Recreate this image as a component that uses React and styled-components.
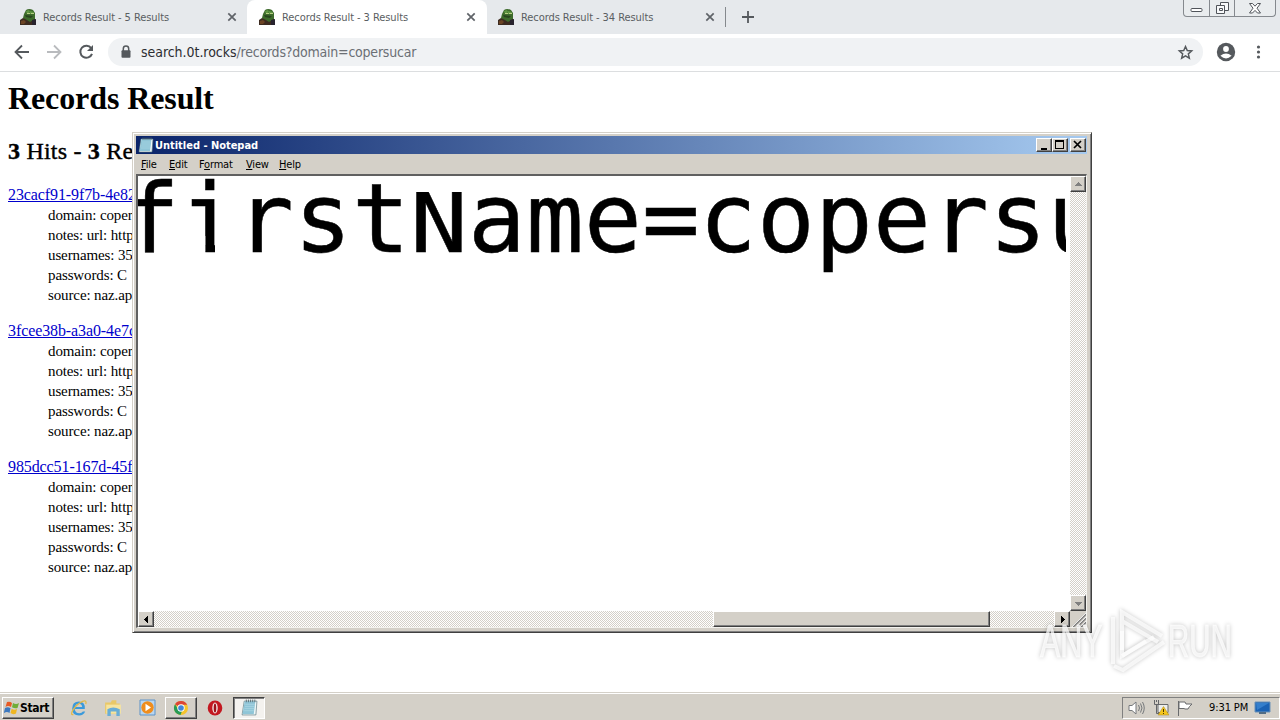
import React from 'react';
import styled, { createGlobalStyle, css } from 'styled-components';

const ui = '"DejaVu Sans Condensed", "DejaVu Sans", sans-serif';

const GlobalStyle = createGlobalStyle`
  * {
    box-sizing: border-box;
  }
  body {
    margin: 0;
    overflow: hidden;
    background: #fff;
  }
`;

const Screen = styled.div`
  position: relative;
  display: flex;
  flex-direction: column;
  width: 1280px;
  height: 720px;
  overflow: hidden;
  background: #fff;
  cursor: default;
`;

const TabStrip = styled.div`
  position: relative;
  display: flex;
  height: 34px;
  flex: none;
  padding-left: 8px;
  background: #e6e9ec;
`;

const Tab = styled.div`
  display: flex;
  align-items: center;
  width: ${(p) => p.$width}px;
  padding: 0 ${(p) => (p.$active ? 9 : 8)}px 0 ${(p) => p.$pad}px;
  border-radius: 8px 8px 0 0;
  background: ${(p) => (p.$active ? '#fff' : 'transparent')};
  font: 11px/14px ${ui};
  color: #5a5e62;
`;

const TabTitle = styled.span`
  flex: 1;
  margin: 1px 0 0 7px;
  white-space: nowrap;
  letter-spacing: -0.07px;
`;

const TabDivider = styled.i`
  width: 1px;
  height: 20px;
  margin: 7px 16px 0 0;
  background: #85898d;
`;

const NewTab = styled.svg`
  margin-top: 11px;
`;

const WindowButtons = styled.div`
  position: absolute;
  top: 0;
  right: 4px;
  display: flex;
  height: 17px;
  border: 1px solid #85898e;
  border-top: 0;
  border-radius: 0 0 4px 4px;
  background: #e9ecee;
`;

const WindowButton = styled.div`
  display: flex;
  align-items: center;
  justify-content: center;
  width: ${(p) => p.$width}px;
  & + & {
    border-left: 1px solid #85898e;
  }
`;

const Toolbar = styled.div`
  display: flex;
  align-items: center;
  height: 38px;
  flex: none;
  padding: 0 0 1px 12px;
  border-bottom: 1px solid #dcdee0;
  background: #fff;
`;

const NavIcon = styled.svg`
  width: 20px;
  height: 20px;
  margin-right: 12px;
  flex: none;
`;

const Omnibox = styled.div`
  display: flex;
  align-items: center;
  width: 1095px;
  height: 28px;
  margin-right: 12px;
  padding: 0 9px 0 12px;
  border-radius: 14px;
  background: #f0f2f4;
  font: 14px/20px ${ui};
  color: #6b6f74;
`;

const Url = styled.span`
  flex: 1;
  margin-left: 9px;
  white-space: nowrap;
  letter-spacing: -0.22px;
  b {
    font-weight: 400;
    letter-spacing: -0.04px;
    color: #2c2d30;
  }
`;

const Page = styled.div`
  flex: 1;
  padding: 9px 8px 0;
  font: 16px/20px "Liberation Serif", serif;
  color: #000;
  white-space: nowrap;
  h1 {
    margin: 0;
    font-size: 32px;
    line-height: 35px;
    letter-spacing: -0.1px;
  }
  h2 {
    margin: 21px 0 20px;
    font-size: 24px;
    line-height: 28px;
    font-weight: 400;
    letter-spacing: 0.2px;
    -webkit-text-stroke: 0.4px #000;
  }
`;

const Hit = styled.dl`
  margin: 0 0 16px;
  a {
    letter-spacing: -0.1px;
    color: #0000cc;
    text-decoration: underline;
  }
  dd {
    margin: 0 0 0 40px;
    font-size: 15px;
    letter-spacing: -0.12px;
  }
`;

const raised = css`
  border: 1px solid;
  border-color: #fff #404040 #404040 #fff;
  box-shadow: inset -1px -1px 0 #808080;
  background: #d4d0c8;
`;

const Notepad = styled.div`
  position: absolute;
  left: 132px;
  top: 132px;
  display: flex;
  flex-direction: column;
  width: 960px;
  height: 501px;
  padding: 2px 3px 4px 2px;
  border: 1px solid;
  border-color: #d4d0c8 #404040 #404040 #d4d0c8;
  box-shadow: inset 1px 1px 0 #fff, inset -1px -1px 0 #808080;
  background: #d4d0c8;
`;

const TitleBar = styled.div`
  display: flex;
  align-items: center;
  height: 18px;
  margin: 1px 1px 0;
  padding: 0 1px 0 2px;
  background: linear-gradient(90deg, #0a246a, #a6caf0);
  font: bold 11px/14px ${ui};
  color: #fff;
  svg {
    flex: none;
  }
`;

const TitleText = styled.span`
  flex: 1;
  margin: 1px 0 0 1px;
  letter-spacing: -0.02px;
`;

const CaptionButton = styled.div`
  display: flex;
  width: 16px;
  height: 14px;
  margin-left: ${(p) => p.$gap || 0}px;
  ${raised}
`;

const MenuBar = styled.div`
  display: flex;
  height: 20px;
  padding: 4px 0 0 6px;
  font: 11px/14px ${ui};
  color: #000;
`;

const MenuItem = styled.span`
  width: ${(p) => p.$width}px;
  letter-spacing: -0.2px;
  white-space: nowrap;
  u {
    text-underline-offset: 1px;
  }
`;

const Editor = styled.div`
  display: grid;
  grid-template-columns: 1fr 16px;
  grid-template-rows: 1fr 16px;
  flex: 1;
  min-height: 0;
  margin: 0 1px;
  border: 2px solid;
  border-color: #606060 #f4f3ef #f4f3ef #606060;
  border-width: 2px 1px 1px 2px;
  background: #fff;
`;

const TextArea = styled.div`
  width: 928px;
  height: 100%;
  overflow: hidden;
`;

const Line = styled.div`
  display: flex;
  height: 97px;
  margin: 0 0 0 -16px;
  font: 96px/86px "DejaVu Sans Mono", monospace;
  letter-spacing: 0.2px;
  color: #000;
  white-space: pre;
  -webkit-text-stroke: 0.5px #000;
`;

const Capital = styled.span`
  transform: scaleY(0.86);
  transform-origin: 0 77px;
`;

// only the stem is kept below the arm, without its foot serif
const SlimI = styled.span`
  margin-right: -2px;
  clip-path: polygon(0 0, 100% 0, 100% 60px, 35px 60px, 35px 100%, 25.4px 100%, 25.4px 60px, 0 60px);
`;

const Caret = styled.i`
  width: 1px;
  height: 96px;
  margin: 1px -1px 0 0;
  background: #000;
`;

const track = css`
  display: flex;
  background: repeating-conic-gradient(#d4d0c8 0 25%, #fff 0 50%) 0 0 / 2px 2px;
`;

const VScroll = styled.div`
  ${track}
  flex-direction: column;
  justify-content: space-between;
`;

const HScroll = styled.div`
  ${track}
`;

const ScrollButton = styled.div`
  display: flex;
  width: 16px;
  height: 16px;
  flex: none;
  align-items: center;
  justify-content: center;
  ${raised}
`;

const Thumb = styled.div`
  width: 277px;
  height: 16px;
  margin: 0 auto 0 559px;
  ${raised}
`;

const Grip = styled.svg`
  background: #d4d0c8;
`;

const Taskbar = styled.div`
  display: flex;
  align-items: center;
  height: 28px;
  flex: none;
  padding: 2px 0 0 2px;
  border-top: 1px solid #d4d0c8;
  box-shadow: inset 0 1px 0 #fff;
  background: #d4d0c8;
  font: 11px/14px ${ui};
  color: #000;
`;

const StartButton = styled.div`
  display: flex;
  align-items: center;
  width: 52px;
  height: 22px;
  padding-left: 1px;
  font: bold 12px/14px ${ui};
  letter-spacing: -0.35px;
  ${raised}
`;

const TaskButton = styled.div`
  display: flex;
  align-items: center;
  justify-content: center;
  width: 32px;
  height: 22px;
  margin-left: ${(p) => p.$gap || 0}px;
  ${(p) => p.$raised && raised}
  ${(p) =>
    p.$pressed &&
    css`
      border: 1px solid;
      border-color: #404040 #fff #fff #404040;
      box-shadow: inset 1px 1px 0 #808080;
      background: #f4f2ef;
    `}
`;

const Tray = styled.div`
  display: flex;
  align-items: center;
  width: 158px;
  height: 22px;
  margin-left: auto;
  padding-left: 5px;
  border: 1px solid;
  border-color: #808080 #fff #fff #808080;
  svg {
    margin-right: 8px;
    flex: none;
  }
`;

const Clock = styled.span`
  width: 50px;
  margin-left: 8px;
  letter-spacing: -0.1px;
  white-space: nowrap;
`;

const Watermark = styled.div`
  position: absolute;
  left: 1040px;
  top: 606px;
  display: flex;
  align-items: center;
  height: 70px;
  color: rgba(255, 255, 255, 0.72);
  filter: drop-shadow(0 0 2px rgba(0, 0, 0, 0.3));
`;

const WatermarkText = styled.span`
  width: ${(p) => p.$width}px;
  font: 46px/50px "Liberation Sans", sans-serif;
  -webkit-text-stroke: 1px rgba(255, 255, 255, 0.6);
  white-space: nowrap;
  span {
    display: inline-block;
    transform: scaleX(${(p) => p.$scale});
    transform-origin: 0 0;
  }
`;

const Frog = () => (
  <svg width="16" height="16" viewBox="0 0 16 16">
    <path d="M4 5L6 1Q9-1 13 1L15 4V11L12 13H5L3 9Z" fill="#3e6b2c" />
    <path d="M6 2L9 1 10 3 7 5ZM10 2L14 3 13 5 10 5Z" fill="#609744" />
    <path d="M5 6L13 7 11 9 6 8Z" fill="#28451f" />
    <path d="M7 4h3v1H7zM11 4h3v1h-3z" fill="#b8cf84" />
    <path d="M0 16V11L3 9 7 11 10 13 15 10 16 16Z" fill="#3d2b20" />
    <path d="M1 12L4 11 6 13 4 15 1 15Z" fill="#6c4424" />
    <path d="M12 11L16 10V16H12Z" fill="#28232e" />
  </svg>
);

const Close = () => (
  <svg width="14" height="14" viewBox="0 0 14 14">
    <path d="M3.3 3.3L10.7 10.7M10.7 3.3L3.3 10.7" stroke="#5f6368" strokeWidth="1.7" />
  </svg>
);

const NoteIcon = ({ size = 16 }) => (
  <svg width={size} height={size} viewBox="0 0 16 16">
    <path d="M3 2H15L14 15H1Z" fill="#eef7f8" stroke="#52727b" strokeWidth=".6" />
    <path d="M3.5 2H13.5L12 14H1.5Z" fill="#8fc5d7" />
    <path d="M4 5H13M3.7 7H12.7M3.3 9H12.3M3 11H12" stroke="#b0dae6" strokeWidth=".6" />
    <path d="M5 .5V3M7 .5V3M9 .5V3M11 .5V3M13 .5V3" stroke="#53646c" strokeWidth=".8" />
  </svg>
);

const Arrow = ({ d, fill = '#000' }) => (
  <svg width="9" height="9" viewBox="0 0 9 9" shapeRendering="crispEdges">
    <path d={d} fill={fill} />
  </svg>
);

const Chrome = () => (
  <svg width="16" height="16" viewBox="0 0 16 16">
    <circle cx="8" cy="8" r="7" fill="#f5c42c" />
    <path d="M8 8L2 4.3A7 7 0 0 1 14.2 4.8H8Z" fill="#dc4437" />
    <path d="M2 4.3L5.3 9.5 9 11 7.5 15A7 7 0 0 1 2 4.3Z" fill="#279b55" />
    <circle cx="8" cy="8" r="3.7" fill="#fff" />
    <circle cx="8" cy="8" r="2.8" fill="#4285d8" />
  </svg>
);

const hits = ['23cacf91-9f7b-4e82-a', '3fcee38b-a3a0-4e7c-b', '985dcc51-167d-45f8-9'];

const App = () => {
  return (
    <Screen>
      <GlobalStyle />
      <TabStrip>
        <Tab $width={239} $pad={12}>
          <Frog />
          <TabTitle>Records Result - 5 Results</TabTitle>
          <Close />
        </Tab>
        <Tab $width={240} $pad={12} $active>
          <Frog />
          <TabTitle>Records Result - 3 Results</TabTitle>
          <Close />
        </Tab>
        <Tab $width={238} $pad={11}>
          <Frog />
          <TabTitle>Records Result - 34 Results</TabTitle>
          <Close />
        </Tab>
        <TabDivider />
        <NewTab width="12" height="12">
          <path d="M6 0V12M0 6H12" stroke="#55595d" strokeWidth="1.8" />
        </NewTab>
        <WindowButtons>
          <WindowButton $width={25}>
            <svg width="13" height="17">
              <rect x="1" y="8.5" width="11" height="3" rx="1" fill="#fff" stroke="#50545a" />
            </svg>
          </WindowButton>
          <WindowButton $width={25}>
            <svg width="13" height="15" fill="#f8f9fa" stroke="#50545a">
              <path d="M4.5 1.5H12.5V9.5H4.5Z" />
              <path d="M.5 4.5H8.5V12.5H.5Z" />
              <path d="M3.5 7.5H6.5V9.5H3.5Z" />
            </svg>
          </WindowButton>
          <WindowButton $width={41}>
            <svg width="12" height="11" viewBox="0 0 12 11">
              <path d="M.5.5H3.5L6 3.2 8.5.5H11.5L8 5.2 11.5 10H8.5L6 7.4 3.5 10H.5L4 5.2Z" fill="#fff" stroke="#50545a" />
            </svg>
          </WindowButton>
        </WindowButtons>
      </TabStrip>
      <Toolbar>
        <NavIcon viewBox="0 0 20 20" fill="none" stroke="#55595d" strokeWidth="1.8">
          <path d="M17 10H4M10 3.5L3.5 10 10 16.5" />
        </NavIcon>
        <NavIcon viewBox="0 0 20 20" fill="none" stroke="#b9bbbe" strokeWidth="1.8">
          <path d="M3 10H16M10 3.5L16.5 10 10 16.5" />
        </NavIcon>
        <NavIcon viewBox="0 0 20 20" fill="none" stroke="#55595d" strokeWidth="2">
          <path d="M15.2 6.2A6 6 0 1 0 16 11.8" />
          <path d="M17 3V9H11Z" fill="#55595d" stroke="none" />
        </NavIcon>
        <Omnibox>
          <svg width="12" height="14" viewBox="0 0 12 14">
            <path d="M3.3 6V3.8a2.7 2.7 0 0 1 5.4 0V6" fill="none" stroke="#55595d" strokeWidth="1.5" />
            <rect x="1.5" y="5.3" width="9" height="7.4" rx="1" fill="#55595d" />
          </svg>
          <Url>
            <b>search.0t.rocks</b>/records?domain=copersucar
          </Url>
          <svg width="17" height="17" viewBox="0 0 24 24" fill="none" stroke="#55595d" strokeWidth="2.1">
            <path d="M12 3.5L14.5 9.2 20.7 9.8 16 13.9 17.4 20 12 16.8 6.6 20 8 13.9 3.3 9.8 9.5 9.2Z" />
          </svg>
        </Omnibox>
        <svg width="22" height="22" viewBox="0 0 22 22">
          <circle cx="11" cy="11" r="9.2" fill="#55595d" />
          <circle cx="11" cy="8" r="2.9" fill="#fff" />
          <path d="M5.4 14.8Q11 10.2 16.6 14.8 11 20 5.4 14.8Z" fill="#fff" />
        </svg>
        <svg width="32" height="20" viewBox="-12 0 32 20">
          <g fill="#55595d">
            <circle cx="9.5" cy="5" r="1.6" />
            <circle cx="9.5" cy="10" r="1.6" />
            <circle cx="9.5" cy="15" r="1.6" />
          </g>
        </svg>
      </Toolbar>
      <Page>
        <h1>Records Result</h1>
        <h2>
          <b>3</b> Hits - <b>3</b> Results
        </h2>
        {hits.map((id) => (
          <Hit key={id}>
            <a>{id}</a>
            <dd>domain: copersucar</dd>
            <dd>notes: url: https</dd>
            <dd>usernames: 35</dd>
            <dd>passwords: C</dd>
            <dd>source: naz.api</dd>
          </Hit>
        ))}
      </Page>
      <Taskbar>
        <StartButton>
          <svg width="16" height="16" viewBox="0 0 16 16">
            <path d="M3 2Q6 1 8 3L7 7Q4 5 1.5 7Z" fill="#e75a24" />
            <path d="M9 3Q12 5 15 3L13.5 8Q11 9 8 7.3Z" fill="#70ad38" />
            <path d="M1 8Q4 6.5 6.5 8.3L5.5 13Q3 11-.2 13Z" fill="#3c78bf" />
            <path d="M7.7 8.7Q10 10.5 13 9L12 13.5Q9 15 6.5 13Z" fill="#efb621" />
          </svg>
          Start
        </StartButton>
        <TaskButton $gap={9}>
          <svg width="18" height="18" viewBox="0 0 18 18">
            <path d="M14.8 10H4.7q.5 4.2 4.8 4.2 2.2 0 3.4-1.7h2.3Q13.5 16.5 9 16.5q-6.8 0-6.8-7T9 2.5q6.4 0 5.8 7.5ZM5 8h7.2q-.5-3.2-3.4-3.2T5 8" fill="#3b9adb" />
            <path d="M3.4 15.6Q.2 16.2 2.6 11.6 6.5 5 12.6 2.3 17 .6 15.8 5" fill="none" stroke="#e2b947" strokeWidth="1.3" />
          </svg>
        </TaskButton>
        <TaskButton $gap={2}>
          <svg width="18" height="18" viewBox="0 0 16 16">
            <path d="M1 3H6L7 1H11V4H14V13H1Z" fill="#e9c867" />
            <path d="M2 5H15V13H2Z" fill="#f6e49f" />
            <path d="M3 9Q8 6 14 9V15H11V11H6V15H3Z" fill="#69add6" />
          </svg>
        </TaskButton>
        <TaskButton $gap={2}>
          <svg width="17" height="17" viewBox="0 0 17 17">
            <path d="M1 1H16V16H1Z" fill="#b9d6f0" stroke="#5c93c8" />
            <circle cx="8.5" cy="8.5" r="6.2" fill="#ef8d1d" />
            <path d="M6.5 4.7V12.3L12 8.5Z" fill="#fff" />
          </svg>
        </TaskButton>
        <TaskButton $gap={2} $raised>
          <Chrome />
        </TaskButton>
        <TaskButton $gap={2}>
          <svg width="16" height="16" viewBox="0 0 16 16">
            <ellipse cx="8" cy="8" rx="7.3" ry="7.5" fill="#c31820" />
            <ellipse cx="8" cy="8" rx="2.7" ry="5.4" fill="#f5e9e6" />
            <ellipse cx="8" cy="8" rx="1.3" ry="4.5" fill="#9c1119" />
          </svg>
        </TaskButton>
        <TaskButton $gap={2} $pressed>
          <NoteIcon size={17} />
        </TaskButton>
        <Tray>
          <svg width="17" height="16" viewBox="0 0 17 16" fill="none" stroke="#76797c">
            <path d="M1 5.5H4L8 2V14L4 10.5H1Z" fill="#fff" />
            <path d="M10.5 5Q12.5 8 10.5 11M12.5 3.5Q15.5 8 12.5 12.5M14.5 2Q18 8 14.5 14" />
          </svg>
          <svg width="16" height="16" viewBox="0 0 16 16">
            <path d="M5 4.5H15V12.5H5Z" fill="#eceeed" stroke="#686a6c" />
            <path d="M1.5 0V4.5H5.5V0M3.5 0V2M3.5 4.5V13.5H8" fill="none" stroke="#64666a" />
            <path d="M10.5 6.5L16 15H5Z" fill="#f4c51c" stroke="#a68524" strokeWidth=".5" />
            <path d="M10.5 9V12M10.5 13V14" stroke="#493600" />
          </svg>
          <svg width="16" height="16" viewBox="0 0 16 16">
            <path d="M1.5 1V16M2 2H8L9 4H15L12.5 6.5 11 9H8L7 8.5H2Z" fill="#fff" stroke="#696b6d" />
          </svg>
          <Clock>9:31 PM</Clock>
          <svg width="17" height="16" viewBox="0 0 17 16">
            <path d="M1 2H16V12H1Z" fill="#1a62b4" stroke="#6a92b8" />
            <path d="M2 3H15L3 10Z" fill="#347fcc" />
            <path d="M5 12H12V14H5Z" fill="#526d85" />
          </svg>
        </Tray>
      </Taskbar>
      <Notepad>
        <TitleBar>
          <NoteIcon />
          <TitleText>Untitled - Notepad</TitleText>
          <CaptionButton>
            <svg width="14" height="12" shapeRendering="crispEdges">
              <path d="M4 9H10V11H4Z" />
            </svg>
          </CaptionButton>
          <CaptionButton>
            <svg width="14" height="12" shapeRendering="crispEdges">
              <path d="M2 1H11V10H2ZM3 3V9H10V3Z" fillRule="evenodd" />
            </svg>
          </CaptionButton>
          <CaptionButton $gap={2}>
            <svg width="14" height="12">
              <path d="M3 2L10 9M10 2L3 9" stroke="#000" strokeWidth="1.7" />
            </svg>
          </CaptionButton>
        </TitleBar>
        <MenuBar>
          <MenuItem $width={28}><u>F</u>ile</MenuItem>
          <MenuItem $width={30}><u>E</u>dit</MenuItem>
          <MenuItem $width={47}>F<u>o</u>rmat</MenuItem>
          <MenuItem $width={33}><u>V</u>iew</MenuItem>
          <MenuItem $width={30}><u>H</u>elp</MenuItem>
        </MenuBar>
        <Editor>
          <TextArea>
            <Line>
              f<SlimI>i</SlimI>rst<Capital>N</Capital>ame=<Caret />copersucar
            </Line>
          </TextArea>
          <VScroll>
            <ScrollButton><Arrow d="M4 2H5V3H6V4H7V5H8V6H1V5H2V4H3V3H4Z" fill="#808080" /></ScrollButton>
            <ScrollButton><Arrow d="M1 3H8V4H7V5H6V6H5V7H4V6H3V5H2V4H1Z" fill="#808080" /></ScrollButton>
          </VScroll>
          <HScroll>
            <ScrollButton><Arrow d="M6 1V8H5V7H4V6H3V5H2V4H3V3H4V2H5V1Z" /></ScrollButton>
            <Thumb />
            <ScrollButton><Arrow d="M3 1V8H4V7H5V6H6V5H7V4H6V3H5V2H4V1Z" /></ScrollButton>
          </HScroll>
          <Grip width="16" height="16">
            <path d="M3 16L16 3M7 16L16 7M11 16L16 11" stroke="#808080" strokeWidth="1.6" />
            <path d="M2 16L16 2M6 16L16 6M10 16L16 10" stroke="#fff" strokeWidth=".8" />
          </Grip>
        </Editor>
      </Notepad>
      <Watermark>
        <WatermarkText $width={70} $scale={0.66}><span>ANY</span></WatermarkText>
        <svg width="58" height="66" viewBox="0 0 58 66" fill="none" stroke="currentColor" strokeWidth="4">
          <path d="M3 9V56M12 42V4L52 28M12 13L48 34M12 48L36 33M4 58L13 62 54 34" />
          <path d="M12 23V48L44 29" />
        </svg>
        <WatermarkText $width={66} $scale={0.64}><span>RUN</span></WatermarkText>
      </Watermark>
    </Screen>
  );
};

export default App;
